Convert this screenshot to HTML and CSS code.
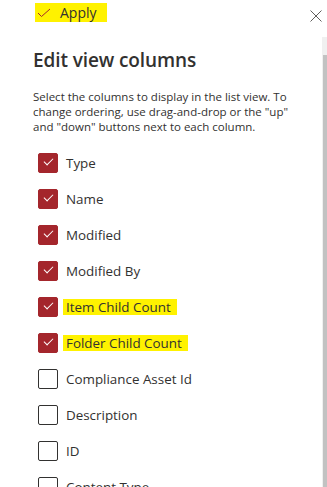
FILE: index.html
```
<!DOCTYPE html>
<html lang="en">
<head>
    <meta charset="UTF-8">
    <title>Edit view columns</title>
    <link rel="stylesheet" href="styles.css">
</head>
<body>

<div class="topbar">
    <button class="apply-btn">
        <svg class="apply-icon" width="14" height="10" viewBox="0 0 14 10"><polyline points="1,5 4.5,8.5 13,1" fill="none" stroke="#a4262c" stroke-width="1"/></svg>
        <span>Apply</span>
    </button>
    <button class="close-btn" aria-label="Close">
        <svg width="12" height="12" viewBox="0 0 12 12"><path d="M0.5 0.5 L11.5 11.5 M11.5 0.5 L0.5 11.5" stroke="#605e5c" stroke-width="1" fill="none"/></svg>
    </button>
</div>

<div class="panel">
    <div class="content">
        <h2>Edit view columns</h2>
        <p class="desc">Select the columns to display in the list view. To change ordering, use drag-and-drop or the "up" and "down" buttons next to each column.</p>

        <ul class="columns">
            <li><span class="box checked"></span><span class="label">Type</span></li>
            <li><span class="box checked"></span><span class="label">Name</span></li>
            <li><span class="box checked"></span><span class="label">Modified</span></li>
            <li><span class="box checked"></span><span class="label">Modified By</span></li>
            <li><span class="box checked"></span><span class="label mark">Item Child Count</span></li>
            <li><span class="box checked"></span><span class="label mark">Folder Child Count</span></li>
            <li><span class="box"></span><span class="label">Compliance Asset Id</span></li>
            <li><span class="box"></span><span class="label">Description</span></li>
            <li><span class="box"></span><span class="label">ID</span></li>
            <li><span class="box"></span><span class="label">Content Type</span></li>
        </ul>
    </div>
    <div class="scrollbar"><div class="thumb"></div></div>
</div>

</body>
</html>
```

FILE: styles.css
```
* {
    box-sizing: border-box;
    margin: 0;
    padding: 0;
    font-family: "Segoe UI", "Open Sans", sans-serif;
}

body {
    background: #fff;
    color: #323130;
    width: 327px;
    height: 487px;
    overflow: hidden;
}

.topbar {
    height: 37px;
    display: flex;
    align-items: flex-start;
    justify-content: space-between;
    padding: 3px 5px 0 35px;
}

.apply-btn {
    display: flex;
    align-items: center;
    gap: 9px;
    height: 19px;
    padding: 0 10px 0 2px;
    background: #fff200;
    border: none;
    color: #323130;
    font-size: 14px;
}

.close-btn {
    background: none;
    border: none;
    margin-top: 7px;
    width: 12px;
    height: 12px;
}

.close-btn svg {
    display: block;
}

.panel {
    display: flex;
    height: 450px;
}

.content {
    flex: 1;
    padding-left: 33px;
}

h2 {
    font-size: 19px;
    font-weight: 600;
    line-height: 28px;
    margin-top: 9px;
    letter-spacing: -0.1px;
}

.desc {
    font-size: 11.5px;
    line-height: 15px;
    margin-top: 15px;
    width: 258px;
}

.columns {
    list-style: none;
    margin-top: 11px;
}

.columns li {
    display: flex;
    align-items: center;
    gap: 8px;
    height: 36px;
    padding-left: 5px;
}

.box {
    width: 20px;
    height: 20px;
    border: 1px solid #323130;
    border-radius: 2px;
    flex-shrink: 0;
}

.box.checked {
    background: #a4262c;
    border-color: #a4262c;
    position: relative;
}

.box.checked::after {
    content: "";
    position: absolute;
    left: 5px;
    top: 4px;
    width: 8px;
    height: 4px;
    border-left: 1.5px solid #fff;
    border-bottom: 1.5px solid #fff;
    transform: rotate(-45deg);
}

.label {
    font-size: 13.4px;
    line-height: 16px;
}

.mark {
    background: #fff200;
    margin-left: -3px;
    padding: 0 6px 0 3px;
}

.scrollbar {
    width: 5px;
    background: #f0f0f0;
    padding-top: 18px;
    padding-left: 1px;
}

.thumb {
    height: 100%;
    background: #c2c2c2;
}
```
